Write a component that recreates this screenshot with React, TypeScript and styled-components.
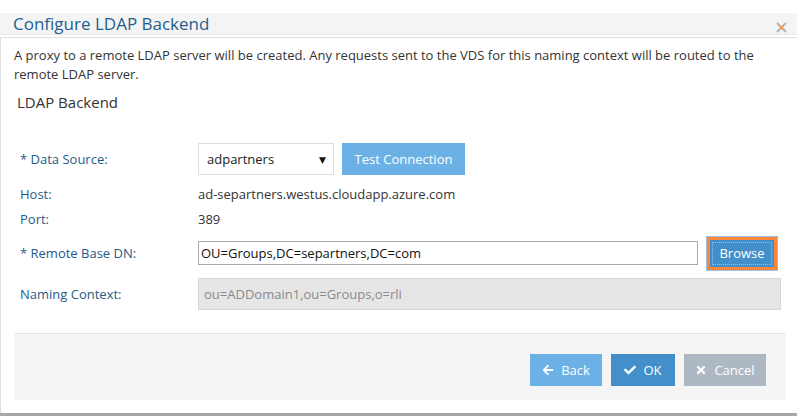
import React from "react";
import styled, { createGlobalStyle } from "styled-components";
import { FaArrowLeft, FaCheck, FaTimes } from "react-icons/fa";

const GlobalStyle = createGlobalStyle`
  html, body {
    margin: 0;
    padding: 0;
    background: #ffffff;
  }
  body {
    font-family: "Open Sans", "DejaVu Sans", sans-serif;
    font-size: 13px;
    color: #333333;
  }
`;

const Dialog = styled.div`
  width: 797px;
  height: 416px;
  box-sizing: border-box;
  display: flex;
  flex-direction: column;
  background: #ffffff;
  border-bottom: 3px solid #aaa6a6;
`;

const Header = styled.div`
  padding-top: 13px;
  background: #ffffff;
`;

const TitleBar = styled.div`
  height: 21px;
  display: flex;
  align-items: center;
  justify-content: space-between;
  padding: 0 10px 0 13px;
  background: #f4f4f4;
  border-bottom: 1px dotted #dcdcdc;
  box-shadow: 0 2px 0 #ffffff, 0 3px 0 #dddddd;
  margin-bottom: 3px;
`;

const Title = styled.h2`
  margin: 0;
  font-size: 17px;
  font-weight: 400;
  color: #1f5f90;
  line-height: 21px;
`;

const CloseIcon = styled.span`
  display: flex;
  width: 11px;
  height: 11px;
  margin-top: 8px;
`;

const Body = styled.div`
  flex: 1;
  display: flex;
  flex-direction: column;
  border-left: 1px solid #dddddd;
  padding: 8px 11px 0 13px;
`;

const Intro = styled.p`
  margin: 0;
  line-height: 19px;
  font-size: 13px;
  color: #333333;
  max-width: 760px;
`;

const SectionTitle = styled.h3`
  margin: 8px 0 0 3px;
  font-size: 15px;
  font-weight: 400;
  color: #333333;
  line-height: 20px;
`;

const Form = styled.div`
  margin-top: 31px;
  display: flex;
  flex-direction: column;
`;

const Row = styled.div<{ $h: number; $gap?: number }>`
  display: flex;
  align-items: center;
  height: ${(p) => p.$h}px;
  margin-top: ${(p) => p.$gap ?? 0}px;
`;

const Label = styled.label`
  width: 184px;
  padding-left: 6px;
  box-sizing: border-box;
  flex-shrink: 0;
  color: #1e5b8a;
  font-size: 13px;
`;

const Value = styled.span`
  color: #333333;
  font-size: 13px;
`;

const Select = styled.div`
  width: 136px;
  height: 32px;
  box-sizing: border-box;
  border: 1px solid #dddddd;
  background: #ffffff;
  display: flex;
  align-items: center;
  justify-content: space-between;
  padding: 0 7px 0 8px;
  font-size: 13px;
  color: #222222;
`;

const Caret = styled.span`
  font-size: 9px;
  color: #111111;
`;

const Button = styled.button<{ $bg: string; $w: number }>`
  height: 32px;
  width: ${(p) => p.$w}px;
  border: none;
  background: ${(p) => p.$bg};
  color: #ffffff;
  font-family: "Open Sans", "DejaVu Sans", sans-serif;
  font-size: 13px;
  display: inline-flex;
  align-items: center;
  justify-content: center;
  gap: 7px;
  padding: 0;
  cursor: pointer;
  svg {
    width: 12px;
    height: 12px;
  }
`;

const TestButton = styled(Button)`
  margin-left: 8px;
`;

const TextInput = styled.div<{ $disabled?: boolean }>`
  box-sizing: border-box;
  height: ${(p) => (p.$disabled ? 32 : 24)}px;
  width: ${(p) => (p.$disabled ? 583 : 500)}px;
  border: 1px solid ${(p) => (p.$disabled ? "#d6d6d6" : "#a9a9a9")};
  background: ${(p) => (p.$disabled ? "#e6e6e6" : "#ffffff")};
  color: ${(p) => (p.$disabled ? "#8a8a8a" : "#111111")};
  display: flex;
  align-items: center;
  padding-left: ${(p) => (p.$disabled ? 5 : 2)}px;
  font-size: 13px;
`;

const BrowseButton = styled.button`
  margin-left: 9px;
  width: 70px;
  height: 33px;
  box-sizing: border-box;
  border: 3px solid #f7873a;
  box-shadow: 0 0 0 1px #9cbde9;
  background: #438fc9;
  color: #ffffff;
  font-family: "Open Sans", "DejaVu Sans", sans-serif;
  font-size: 13px;
  outline: 1px dotted rgba(255, 255, 255, 0.45);
  outline-offset: -6px;
  padding: 0;
`;

const Footer = styled.div`
  margin: 23px 0 0 0;
  height: 67px;
  box-sizing: border-box;
  background: #f5f5f5;
  border-top: 1px solid #e5e5e5;
  display: flex;
  justify-content: flex-end;
  align-items: flex-start;
  gap: 9px;
  padding: 20px 20px 0 0;
`;

const App: React.FC = () => {
  return (
    <>
      <GlobalStyle />
      <Dialog>
        <Header>
          <TitleBar>
            <Title>Configure LDAP Backend</Title>
            <CloseIcon>
              <svg width="11" height="11" viewBox="0 0 11 11">
                <path d="M1 1 L10 10 M10 1 L1 10" stroke="#b4b4b4" strokeWidth="2" />
                <path d="M3.5 3.5 L7.5 7.5 M7.5 3.5 L3.5 7.5" stroke="#f09a5a" strokeWidth="1.4" />
              </svg>
            </CloseIcon>
          </TitleBar>
        </Header>
        <Body>
          <Intro>
            A proxy to a remote LDAP server will be created. Any requests sent to the VDS for this
            naming context will be routed to the remote LDAP server.
          </Intro>
          <SectionTitle>LDAP Backend</SectionTitle>
          <Form>
            <Row $h={32}>
              <Label>* Data Source:</Label>
              <Select>
                adpartners
                <Caret>▼</Caret>
              </Select>
              <TestButton $bg="#6cb1e5" $w={123}>
                Test Connection
              </TestButton>
            </Row>
            <Row $h={30} $gap={4}>
              <Label>Host:</Label>
              <Value>ad-separtners.westus.cloudapp.azure.com</Value>
            </Row>
            <Row $h={20}>
              <Label>Port:</Label>
              <Value>389</Value>
            </Row>
            <Row $h={34} $gap={7}>
              <Label>* Remote Base DN:</Label>
              <TextInput>OU=Groups,DC=separtners,DC=com</TextInput>
              <BrowseButton>Browse</BrowseButton>
            </Row>
            <Row $h={32} $gap={8}>
              <Label>Naming Context:</Label>
              <TextInput $disabled>ou=ADDomain1,ou=Groups,o=rli</TextInput>
            </Row>
          </Form>
          <Footer>
            <Button $bg="#6cb1e5" $w={72}>
              <FaArrowLeft />
              Back
            </Button>
            <Button $bg="#438fc9" $w={64}>
              <FaCheck />
              OK
            </Button>
            <Button $bg="#adb8c3" $w={82}>
              <FaTimes />
              Cancel
            </Button>
          </Footer>
        </Body>
      </Dialog>
    </>
  );
};

export default App;
